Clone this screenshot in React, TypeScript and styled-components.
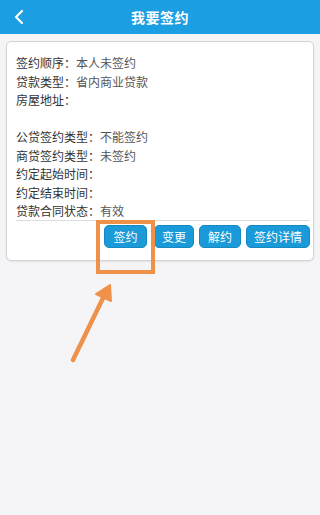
import React from 'react';
import styled, { createGlobalStyle } from 'styled-components';

const GlobalStyle = createGlobalStyle`
  html, body {
    margin: 0;
    padding: 0;
    background: #f5f5f8;
    font-family: "Noto Sans CJK SC", "Noto Sans", sans-serif;
  }
`;

const Page = styled.div`
  position: relative;
  width: 320px;
  height: 515px;
  background: #f5f5f8;
  overflow: hidden;
`;

const Header = styled.div`
  position: relative;
  height: 34px;
  background: #1b9ee2;
  display: flex;
  align-items: center;
  justify-content: center;
`;

const Title = styled.h1`
  margin: 0;
  color: #fff;
  font-size: 14px;
  font-weight: bold;
  letter-spacing: 0.5px;
`;

const BackButton = styled.div`
  position: absolute;
  left: 12px;
  top: 9px;
  width: 14px;
  height: 16px;
  display: flex;
`;

const Body = styled.div`
  padding: 7px 6px 0 6px;
`;

const Card = styled.div`
  background: #fff;
  border: 1px solid #d3d3d6;
  border-radius: 5px;
  padding: 11.5px 3px 12px 9px;
  box-shadow: 0 1px 2px rgba(0, 0, 0, 0.08);
`;

const Row = styled.div`
  display: flex;
  height: 18.5px;
  align-items: center;
  font-size: 12px;
  color: #333;
  white-space: nowrap;
`;

const Label = styled.span`
  color: #333;
`;

const Value = styled.span`
  color: #555;
`;

const Divider = styled.div`
  height: 1px;
  background: #dcdcdc;
`;

const Actions = styled.div`
  display: flex;
  justify-content: flex-end;
  gap: 5px;
  margin-top: 4px;
`;

const ActionButton = styled.button<{ $w: number; $gapAfter?: number }>`
  box-sizing: border-box;
  width: ${p => p.$w}px;
  margin-right: ${p => p.$gapAfter ?? 0}px;
  height: 23px;
  padding: 0;
  background: #1a9ad9;
  border: 1px solid #1688c2;
  border-radius: 5px;
  color: #fff;
  font-family: "Noto Sans CJK SC", "Noto Sans", sans-serif;
  font-size: 12px;
  line-height: 21px;
`;

const Overlay = styled.svg`
  position: absolute;
  left: 0;
  top: 0;
  pointer-events: none;
`;

const rows: [string, string][] = [
  ['签约顺序：', '本人未签约'],
  ['贷款类型：', '省内商业贷款'],
  ['房屋地址：', ''],
  ['', ''],
  ['公贷签约类型：', '不能签约'],
  ['商贷签约类型：', '未签约'],
  ['约定起始时间：', ''],
  ['约定结束时间：', ''],
  ['贷款合同状态：', '有效'],
];

export default function App() {
  return (
    <Page>
      <GlobalStyle />
      <Header>
        <BackButton>
          <svg width="14" height="16" viewBox="0 0 14 16">
            <path d="M10 2 L4 8 L10 14" fill="none" stroke="#fff" strokeWidth="2.2" strokeLinecap="round" strokeLinejoin="round" />
          </svg>
        </BackButton>
        <Title>我要签约</Title>
      </Header>
      <Body>
        <Card>
          {rows.map(([label, value], i) => (
            <Row key={i}>
              <Label>{label}</Label>
              <Value>{value}</Value>
            </Row>
          ))}
          <Divider />
          <Actions>
            <ActionButton $w={43} $gapAfter={2}>签约</ActionButton>
            <ActionButton $w={40}>变更</ActionButton>
            <ActionButton $w={42}>解约</ActionButton>
            <ActionButton $w={64}>签约详情</ActionButton>
          </Actions>
        </Card>
      </Body>
      <Overlay width="320" height="515" viewBox="0 0 320 515">
        <rect x="98" y="222" width="55" height="50" fill="none" stroke="#f0914a" strokeWidth="4" />
        <line x1="73" y1="360" x2="104" y2="296" stroke="#f0914a" strokeWidth="4.5" strokeLinecap="round" />
        <polygon points="110,285 96,294 111,301" fill="#f0914a" stroke="#f0914a" strokeWidth="2" strokeLinejoin="round" />
      </Overlay>
    </Page>
  );
}
